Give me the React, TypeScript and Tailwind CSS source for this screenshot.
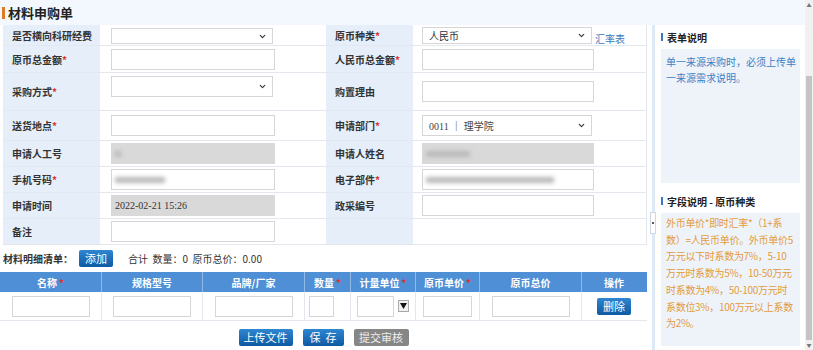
import { ChevronDown } from "lucide-react";

const font = "font-['Noto_Sans_CJK_SC','Noto_Sans',sans-serif]";
const serif = "font-['Liberation_Serif','Noto_Sans_CJK_SC',serif]";

const Req = () => <span className="text-[#e0312f]">*</span>;

const Label = ({ text, req, w }: { text: string; req?: boolean; w: string }) => (
  <div className={`${w} h-full flex items-center bg-[#e5eef9] pl-[9px] text-[10px] font-bold text-[#333]`}>
    {text}
    {req && <Req />}
  </div>
);

const Box = ({ w, gray, children }: { w: string; gray?: boolean; children?: React.ReactNode }) => (
  <div
    className={`${w} h-[21px] border border-[#d6d6d6] flex items-center px-[3px] text-[10px] text-[#333] ${
      gray ? "bg-[#d9d9d9] border-[#d9d9d9]" : "bg-white"
    }`}
  >
    {children}
  </div>
);

const Select = ({ w, h = "h-[21px]", children }: { w: string; h?: string; children?: React.ReactNode }) => (
  <div className={`${w} ${h} border border-[#d6d6d6] bg-white flex items-center justify-between pl-[6px] pr-[5px] text-[10px] text-[#333]`}>
    <span>{children}</span>
    <ChevronDown size={9} strokeWidth={3} className="text-[#333]" />
  </div>
);

const Smudge = ({ w }: { w: string }) => <span className={`${w} h-[6px] bg-[#b9b9b9] blur-[2px] inline-block`} />;

const BlueBtn = ({ children, w }: { children: React.ReactNode; w: string }) => (
  <div
    className={`${w} h-[17px] rounded-[2px] bg-gradient-to-b from-[#2f86d1] to-[#0d5aa3] text-white text-[11px] flex items-center justify-center`}
  >
    {children}
  </div>
);

const Row = ({ h, children }: { h: string; children: React.ReactNode }) => (
  <div className={`${h} flex items-center border-b border-[#e3e8ee]`}>{children}</div>
);

const L1 = "w-[97px]";
const V1 = "w-[226px] h-full flex items-center pl-[11px]";
const L2 = "w-[87px]";
const V2 = "w-[233px] h-full flex items-center pl-[9px]";

const cols = [
  { t: "名称", req: true, w: "w-[102px]" },
  { t: "规格型号", w: "w-[101px]" },
  { t: "品牌/厂家", w: "w-[102px]" },
  { t: "数量", req: true, w: "w-[46px]" },
  { t: "计量单位", req: true, w: "w-[65px]" },
  { t: "原币单价", req: true, w: "w-[64px]" },
  { t: "原币总价", w: "w-[102px]" },
  { t: "操作", w: "w-[64px]" },
];

const formNote = ["单一来源采购时，必须上传单", "一来源需求说明。"];
const fieldNote = [
  "外币单价*即时汇率*（1+系",
  "数）=人民币单价。外币单价5",
  "万元以下时系数为7%，5-10",
  "万元时系数为5%，10-50万元",
  "时系数为4%，50-100万元时",
  "系数位3%，100万元以上系数",
  "为2%。",
];

export default function App() {
  return (
    <div className={`w-[813px] h-[350px] overflow-hidden flex bg-white ${font}`}>
      <div className="w-[805px] flex flex-col">
        {/* title bar */}
        <div className="h-[25px] bg-[#f2f8fd] flex items-center pl-[2px] shrink-0">
          <span className="w-[3px] h-[12px] bg-[#e07b22] mr-[3px]" />
          <span className="text-[13px] font-bold text-[#222]">材料申购单</span>
        </div>

        <div className="flex flex-1 relative">
          {/* left: form + detail list */}
          <div className="w-[647px] flex flex-col">
            <div className="pl-[3px] border-r border-[#e3e8ee]">
              <Row h="h-[21px]">
                <Label text="是否横向科研经费" w={L1} />
                <div className={`${V1} items-start pt-[3px]`}>
                  <Select w="w-[162px]" h="h-[16px]" />
                </div>
                <Label text="原币种类" req w={L2} />
                <div className={`${V2} items-start pt-[2px]`}>
                  <Select w="w-[170px]" h="h-[17px]">人民币</Select>
                  <span className="ml-[3px] mt-[4px] text-[10px] text-[#3a78bd]">汇率表</span>
                </div>
              </Row>
              <Row h="h-[27px]">
                <Label text="原币总金额" req w={L1} />
                <div className={V1}><Box w="w-[164px]" /></div>
                <Label text="人民币总金额" req w={L2} />
                <div className={V2}><Box w="w-[172px]" /></div>
              </Row>
              <Row h="h-[38px]">
                <Label text="采购方式" req w={L1} />
                <div className={`${V1} items-start pt-[3px]`}><Select w="w-[162px]" /></div>
                <Label text="购置理由" w={L2} />
                <div className={V2}><Box w="w-[172px]" /></div>
              </Row>
              <Row h="h-[30px]">
                <Label text="送货地点" req w={L1} />
                <div className={V1}><Box w="w-[164px]" /></div>
                <Label text="申请部门" req w={L2} />
                <div className={V2}>
                  <Select w="w-[170px]">
                    <span className={`${serif} text-[#444]`}>0011 ｜ 理学院</span>
                  </Select>
                </div>
              </Row>
              <Row h="h-[26px]">
                <Label text="申请人工号" w={L1} />
                <div className={V1}><Box w="w-[164px]" gray><Smudge w="w-[6px]" /></Box></div>
                <Label text="申请人姓名" w={L2} />
                <div className={V2}><Box w="w-[172px]" gray><Smudge w="w-[44px]" /></Box></div>
              </Row>
              <Row h="h-[26px]">
                <Label text="手机号码" req w={L1} />
                <div className={V1}><Box w="w-[164px]"><Smudge w="w-[50px]" /></Box></div>
                <Label text="电子部件" req w={L2} />
                <div className={V2}><Box w="w-[172px]"><Smudge w="w-[128px]" /></Box></div>
              </Row>
              <Row h="h-[26px]">
                <Label text="申请时间" w={L1} />
                <div className={V1}>
                  <Box w="w-[164px]" gray><span className={`${serif} text-[10px]`}>2022-02-21 15:26</span></Box>
                </div>
                <Label text="政采编号" w={L2} />
                <div className={V2}><Box w="w-[172px]" /></div>
              </Row>
              <Row h="h-[26px]">
                <Label text="备注" w={L1} />
                <div className={V1}><Box w="w-[164px]" /></div>
                <Label text="" w={L2} />
                <div className={V2} />
              </Row>
            </div>

            {/* detail list toolbar */}
            <div className="h-[27px] flex items-center pl-[3px] text-[10px] text-[#333]">
              <span className="font-bold">材料明细清单：</span>
              <BlueBtn w="w-[34px] ml-[6px]">添加</BlueBtn>
              <span className="ml-[15px]">合计&nbsp;&nbsp;数量：0&nbsp;&nbsp;原币总价：0.00</span>
            </div>

            {/* table */}
            <div className="flex h-[20px] bg-[#4f8fd6]">
              {cols.map((c) => (
                <div
                  key={c.t}
                  className={`${c.w} border-r border-[#8fb8e6] last:border-r-0 flex items-center justify-center text-[10px] font-bold text-white`}
                >
                  {c.t}
                  {c.req && <span className="text-[#e0312f] ml-[2px]">*</span>}
                </div>
              ))}
            </div>
            <div className="flex h-[29px] border-b border-[#e3e8ee]">
              <div className="w-[102px] border-r border-[#e3e8ee] flex items-center justify-center"><Box w="w-[78px]" /></div>
              <div className="w-[101px] border-r border-[#e3e8ee] flex items-center justify-center"><Box w="w-[78px]" /></div>
              <div className="w-[102px] border-r border-[#e3e8ee] flex items-center justify-center"><Box w="w-[78px]" /></div>
              <div className="w-[46px] border-r border-[#e3e8ee] flex items-center pl-[4px]"><Box w="w-[25px]" /></div>
              <div className="w-[65px] border-r border-[#e3e8ee] flex items-center pl-[6px] gap-[4px]">
                <Box w="w-[37px]" />
                <div className="w-[11px] h-[12px] border border-[#aaa] bg-[#f0f0f0] flex items-center justify-center">
                  <svg width="7" height="6" viewBox="0 0 7 6"><path d="M0 0h7L3.5 6z" fill="#111" /></svg>
                </div>
              </div>
              <div className="w-[64px] border-r border-[#e3e8ee] flex items-center justify-center"><Box w="w-[49px]" /></div>
              <div className="w-[102px] border-r border-[#e3e8ee] flex items-center justify-center"><Box w="w-[78px]" /></div>
              <div className="w-[64px] flex items-center justify-center">
                <BlueBtn w="w-[34px]">删除</BlueBtn>
              </div>
            </div>

            {/* actions */}
            <div className="flex justify-center gap-[10px] pt-[8px]">
              <BlueBtn w="w-[54px]">上传文件</BlueBtn>
              <BlueBtn w="w-[41px] gap-[5px]">
                <span>保</span>
                <span>存</span>
              </BlueBtn>
              <div className="w-[55px] h-[17px] rounded-[2px] bg-[#868686] text-[#eee] text-[11px] flex items-center justify-center">
                提交审核
              </div>
            </div>
          </div>

          <div className="w-[5px]" />

          {/* right: notes panel */}
          <div className="w-[153px] border-l-[3px] border-[#dce9f6] pl-[6px] pr-[5px] flex flex-col">
            <div className="h-[24px] flex items-center">
              <span className="w-[2px] h-[8px] bg-[#3a78bd] mr-[4px]" />
              <span className="text-[10px] font-bold text-[#222]">表单说明</span>
            </div>
            <div className="h-[134px] bg-[#eef3fa] pl-[5px] pt-[5px] text-[10px] leading-[16px] text-[#3c80c4] overflow-hidden">
              {formNote.map((l) => (
                <div key={l} className="whitespace-nowrap">{l}</div>
              ))}
            </div>
            <div className="h-[30px] flex items-center pt-[6px]">
              <span className="w-[2px] h-[8px] bg-[#3a78bd] mr-[4px]" />
              <span className="text-[10px] font-bold text-[#222]">字段说明 - 原币种类</span>
            </div>
            <div className="h-[133px] bg-[#eef3fa] pl-[5px] pt-[2px] text-[10px] leading-[16.7px] text-[#e39b3a] tracking-[-0.3px] overflow-hidden">
              {fieldNote.map((l) => (
                <div key={l} className="whitespace-nowrap">{l}</div>
              ))}
            </div>
          </div>

          {/* collapse handle */}
          <div className="absolute left-[650px] top-[187px] w-[6px] h-[22px] bg-white border border-[#cfd8e2] flex items-center justify-center">
            <span className="w-[2px] h-[2px] bg-[#222] rounded-full" />
          </div>
        </div>
      </div>

      {/* scrollbar */}
      <div className="w-[8px] bg-[#f1f1f1] flex flex-col items-center pt-[2px] pb-[2px]">
        <span className="text-[5px] leading-[6px] text-[#777]">▲</span>
        <div className="mt-[68px] w-[6px] h-[264px] bg-[#c4c4c4]" />
        <span className="text-[5px] leading-[6px] text-[#777] mt-auto">▼</span>
      </div>
    </div>
  );
}
